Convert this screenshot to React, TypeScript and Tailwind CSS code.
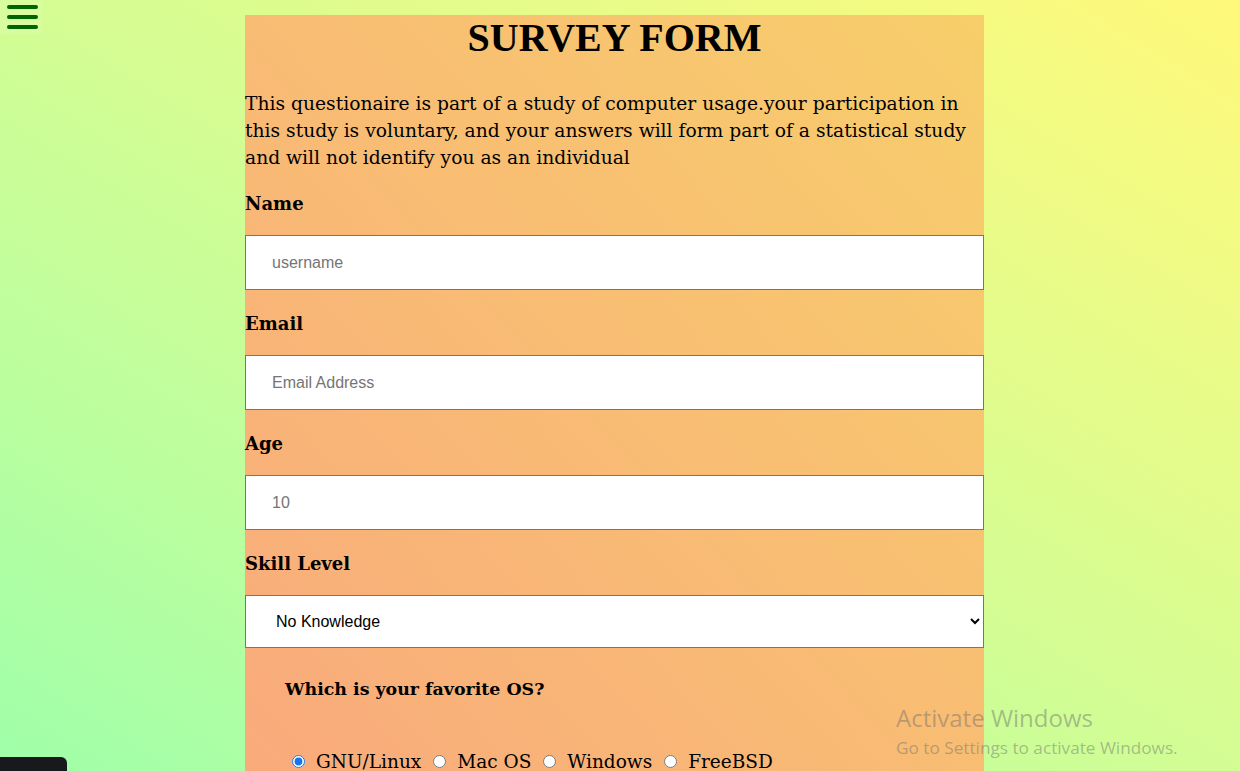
import React from 'react';

const serif = "font-['DejaVu_Serif','Liberation_Serif',serif]";

function Field({ label, first, children }: { label: string; first?: boolean; children: React.ReactNode }) {
  return (
    <div className={first ? 'mt-[19px]' : 'mt-[20px]'}>
      <label className={`block text-[18px] leading-[27px] font-bold ${serif}`}>{label}</label>
      <div className="mt-[18px]">{children}</div>
    </div>
  );
}

export default function App() {
  const inputCls =
    "block w-full h-[55px] bg-white border border-[#767676] pl-[26px] text-[16px] font-['Liberation_Sans',Arial,sans-serif] text-black placeholder:text-[#757575] outline-none";

  return (
    <div className="relative h-screen overflow-hidden bg-linear-to-tr from-[#9effa9] to-[#fff97a]">
      {/* menu button */}
      <button className="absolute left-0 top-0 w-[42px] h-[34px] flex flex-col gap-[6px] pl-[7px] pt-[5px] bg-white/10">
        <span className="block w-[31px] h-[4px] rounded-full bg-[#006400]" />
        <span className="block w-[31px] h-[4px] rounded-full bg-[#006400]" />
        <span className="block w-[31px] h-[4px] rounded-full bg-[#006400]" />
      </button>

      <div className="ml-[245px] mt-[15px] w-[739px] bg-linear-to-tr from-[#f9a97c] to-[#f7ce6a] text-black pb-10">
        <h1 className="pt-[3px] text-center text-[40px] leading-[40px] font-bold font-['Liberation_Serif','Times_New_Roman',serif]">
          SURVEY FORM
        </h1>
        <p className={`mt-[32px] text-[18.7px] leading-[27px] ${serif}`}>
          This questionaire is part of a study of computer usage.your participation in this study is voluntary, and
          your answers will form part of a statistical study and will not identify you as an individual
        </p>

        <Field label="Name" first>
          <input className={inputCls} placeholder="username" />
        </Field>
        <Field label="Email">
          <input className={inputCls} placeholder="Email Address" />
        </Field>
        <Field label="Age">
          <input className={inputCls} placeholder="10" />
        </Field>
        <Field label="Skill Level">
          <select
            defaultValue="none"
            className="block w-full h-[53px] bg-white border border-[#767676] pl-[26px] pr-2 text-[16px] font-['Liberation_Sans',Arial,sans-serif] text-black outline-none"
          >
            <option value="none">No Knowledge</option>
            <option value="basic">Basic</option>
            <option value="advanced">Advanced</option>
          </select>
        </Field>

        <div className="pl-[40px] pt-[28px]">
          <h3 className={`text-[17.4px] leading-[27px] font-bold ${serif}`}>Which is your favorite OS?</h3>
          <div className={`mt-[45px] flex items-center text-[18.5px] leading-[27px] ${serif}`}>
            {['GNU/Linux', 'Mac OS', 'Windows', 'FreeBSD'].map((os, i) => (
              <label key={os} className="flex items-center">
                <input
                  type="radio"
                  name="os"
                  defaultChecked={i === 0}
                  className={`w-[13px] h-[13px] mr-[11px] accent-[#1a73e8] ${i === 0 ? 'ml-[7px]' : 'ml-[12px]'}`}
                />
                {os}
              </label>
            ))}
          </div>
        </div>
      </div>

      {/* bottom-left dark tab */}
      <div className="absolute left-0 bottom-0 w-[67px] h-[14px] bg-[#17191d] rounded-tr-[6px]" />

      {/* windows watermark */}
      <div className="absolute left-[896px] top-[702px] font-['Open_Sans','Noto_Sans',sans-serif] text-[#6b6b6b]/45 pointer-events-none">
        <div className="text-[24px] leading-[31px]">Activate Windows</div>
        <div className="text-[17.2px] leading-[23px] mt-[3px]">Go to Settings to activate Windows.</div>
      </div>
    </div>
  );
}
